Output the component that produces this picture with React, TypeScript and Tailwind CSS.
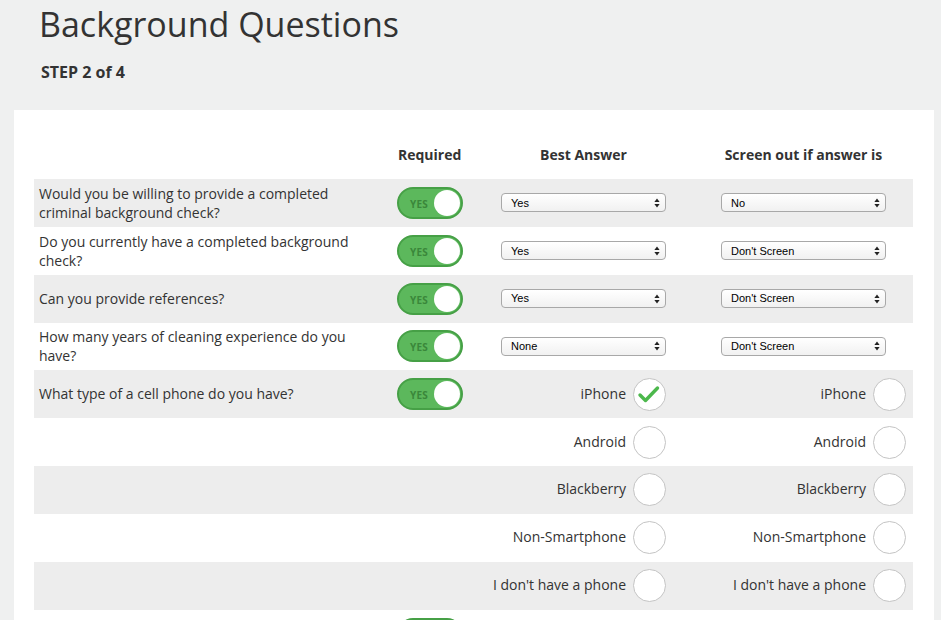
import React from 'react'

const font = { fontFamily: '"Open Sans", "Liberation Sans", sans-serif' }

type Question = {
  text: string
  best: string
  screen: string
}

const QUESTIONS: Question[] = [
  { text: 'Would you be willing to provide a completed criminal background check?', best: 'Yes', screen: 'No' },
  { text: 'Do you currently have a completed background check?', best: 'Yes', screen: "Don't Screen" },
  { text: 'Can you provide references?', best: 'Yes', screen: "Don't Screen" },
  { text: 'How many years of cleaning experience do you have?', best: 'None', screen: "Don't Screen" },
]

const PHONES = ['iPhone', 'Android', 'Blackberry', 'Non-Smartphone', "I don't have a phone"]

function Toggle({ label = true }: { label?: boolean }) {
  return (
    <div className="relative flex items-center w-[66px] h-[32px] rounded-full bg-[#5cb85c] border-2 border-[#46a046]">
      {label && <span className="pl-[11px] pt-[2px] text-[10px] leading-none font-bold text-[#3a873a] tracking-wide">YES</span>}
      <span className="absolute right-[1px] top-[1px] w-[26px] h-[26px] rounded-full bg-white" />
    </div>
  )
}

function Select({ value }: { value: string }) {
  return (
    <div
      className="flex items-center justify-between w-[165px] h-[19px] rounded-[4px] border border-[#a8a8a8] bg-gradient-to-b from-white to-[#f1f1f1] pl-[9px] pr-[5px] text-[11px] text-black"
      style={{ fontFamily: '"Liberation Sans", Arial, sans-serif' }}
    >
      <span>{value}</span>
      <svg width="6" height="10" viewBox="0 0 6 10">
        <path d="M3 0.5 L5.6 4 L0.4 4 Z" fill="#222" />
        <path d="M3 9.5 L5.6 6 L0.4 6 Z" fill="#222" />
      </svg>
    </div>
  )
}

function Radio({ label, checked }: { label: string; checked?: boolean }) {
  return (
    <div className="flex items-center justify-end gap-[7px]">
      <span className="text-[14px] text-[#333] whitespace-nowrap -mt-[2px]">{label}</span>
      <div className="shrink-0 w-[33px] h-[33px] rounded-full border border-[#c4c4c4] bg-white flex items-center justify-center">
        {checked && (
          <svg width="33" height="33" viewBox="0 0 33 33" className="-m-px">
            <path d="M7 17 L12.5 22.5 L24.5 10" fill="none" stroke="#4cb84c" strokeWidth="3.4" strokeLinecap="round" strokeLinejoin="round" />
          </svg>
        )}
      </div>
    </div>
  )
}

function Row({ shaded, children }: { shaded: boolean; children: React.ReactNode }) {
  return (
    <div className={`grid grid-cols-[356px_104px_179px_240px] h-[47.85px] items-center ${shaded ? 'bg-[#ededed]' : 'bg-white'}`}>
      {children}
    </div>
  )
}

export default function App() {
  return (
    <div className="min-h-screen bg-[#eff0f0] text-[#333]" style={font}>
      <div className="pl-[39px]">
        <h1 className="pt-[3px] text-[34px] leading-[42px] font-normal">Background Questions</h1>
        <div className="mt-[16px] text-[16px] leading-[22px] font-bold pl-[2px]">STEP 2 of 4</div>
      </div>

      <div className="mt-[27px] ml-[14px] w-[920px] bg-white pt-[20px] pl-[20px] pr-[21px] pb-[20px]">
        <div className="grid grid-cols-[356px_104px_179px_240px] h-[49px] items-end pb-[14px] text-[14px] font-bold">
          <div />
          <div className="pl-[8px]">Required</div>
          <div className="ml-[7px] w-[165px] text-center">Best Answer</div>
          <div className="ml-[48px] w-[165px] text-center">Screen out if answer is</div>
        </div>

        {QUESTIONS.map((q, i) => (
          <Row key={i} shaded={i % 2 === 0}>
            <div className="pl-[5px] pr-[20px] text-[14px] leading-[19px]">{q.text}</div>
            <div className="pl-[7px]"><Toggle /></div>
            <div className="pl-[7px]"><Select value={q.best} /></div>
            <div className="pl-[48px]"><Select value={q.screen} /></div>
          </Row>
        ))}

        {PHONES.map((p, i) => (
          <Row key={p} shaded={i % 2 === 0}>
            <div className="pl-[5px] text-[14px] leading-[19px] -mt-[2px]">{i === 0 ? 'What type of a cell phone do you have?' : ''}</div>
            <div className="pl-[7px]">{i === 0 && <Toggle />}</div>
            <div className="pr-[7px]"><Radio label={p} checked={i === 0} /></div>
            <div className="pr-[7px]"><Radio label={p} /></div>
          </Row>
        ))}

        <Row shaded={false}>
          <div />
          <div className="pl-[7px]"><Toggle label={false} /></div>
          <div />
          <div />
        </Row>
      </div>
    </div>
  )
}
